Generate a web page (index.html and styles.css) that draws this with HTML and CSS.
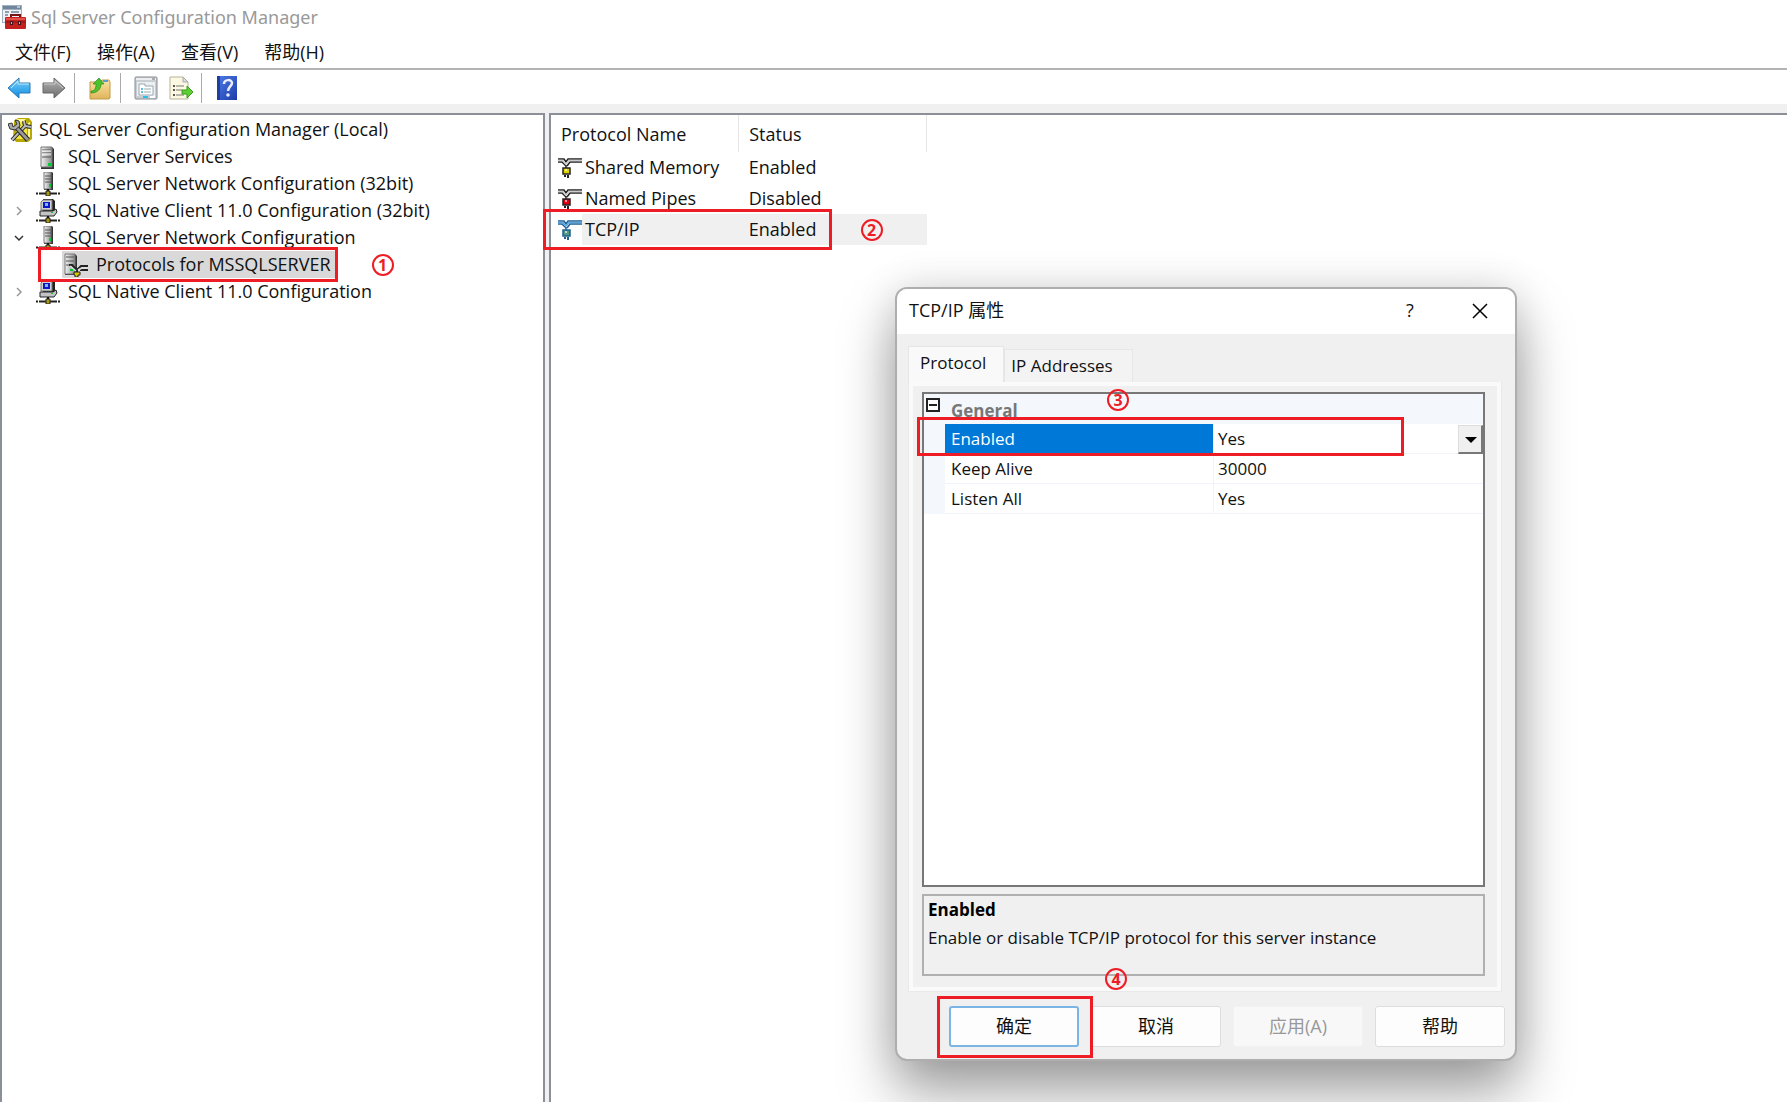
FILE: index.html
```html
<!DOCTYPE html>
<html lang="zh-CN">
<head>
<meta charset="utf-8">
<title>Sql Server Configuration Manager</title>
<link rel="stylesheet" href="styles.css">
</head>
<body>
<svg class="sprite" aria-hidden="true">
  <defs>
    <linearGradient id="steel" x1="0" x2="1"><stop offset="0" stop-color="#f4f4f4"/><stop offset="1" stop-color="#8c8c8c"/></linearGradient>
    <linearGradient id="sky" x1="0" x2="0" y1="0" y2="1"><stop offset="0" stop-color="#7fd3fb"/><stop offset="1" stop-color="#0b8be0"/></linearGradient>
    <linearGradient id="ash" x1="0" x2="0" y1="0" y2="1"><stop offset="0" stop-color="#b5b5b5"/><stop offset="1" stop-color="#6c6c6c"/></linearGradient>
    <linearGradient id="navy" x1="0" x2="1" y1="0" y2="1"><stop offset="0" stop-color="#4f7be8"/><stop offset="1" stop-color="#1c3ca8"/></linearGradient>
    <linearGradient id="manila" x1="0" x2="0" y1="0" y2="1"><stop offset="0" stop-color="#fbe3a0"/><stop offset="1" stop-color="#dfb45c"/></linearGradient>
  </defs>
  <symbol id="server" viewBox="0 0 24 24">
    <path d="M5 2h11l2 2v20H5z" fill="#333"/><path d="M5 2h11v20H5z" fill="url(#steel)" stroke="#777"/>
    <path d="M6 5h9M6 8h9M6 12h9" stroke="#555"/><path d="M6 6h9M6 9h9" stroke="#fff"/>
    <path d="M12 18h3v3h-3z" fill="#0c3"/>
  </symbol>
  <symbol id="netserver" viewBox="0 0 24 24">
    <path d="M8 0h8l1 1v17H8z" fill="#333"/><path d="M8 0h7v17H8z" fill="url(#steel)" stroke="#777"/>
    <path d="M9 4h6M9 7h6M9 10h6" stroke="#555"/><path d="M13 12h2v3h-2z" fill="#0c3"/>
    <path d="M12 17v4" stroke="#111" stroke-width="2"/><path d="M3 21.500h18" stroke="#222" stroke-width="2"/>
    <path d="M0 21.500h2M22 21.500h2" stroke="#222" stroke-width="2"/><path d="M10 19h4v5h-4z" fill="#a99a10" stroke="#222"/>
  </symbol>
  <symbol id="client" viewBox="0 0 24 24">
    <path d="M7 0h10l2 2v11H7z" fill="#222"/><path d="M7 1h9v10H5V3z" fill="#d0d0d0" stroke="#777"/>
    <path d="M7 3h7v6H7z" fill="#0a18c8"/><path d="M9 4h3v3H9z" fill="#7bb8ff"/>
    <path d="M4 12h13l3-2 1 3-3 4H4z" fill="#c4c4c4" stroke="#222"/><path d="M15 13h2v1h-2z" fill="#0c3"/>
    <path d="M12 17v4" stroke="#111" stroke-width="2"/><path d="M3 21.500h18M0 21.500h2M22 21.500h2" stroke="#222" stroke-width="2"/>
    <path d="M10 19h4v5h-4z" fill="#a99a10" stroke="#222"/>
  </symbol>
  <symbol id="protocols" viewBox="0 0 24 24">
    <path d="M1 1h10l2 2v19H1z" fill="#333"/><path d="M1 1h10v20H1z" fill="url(#steel)" stroke="#777"/>
    <path d="M2 4h8M2 8h8M2 12h8" stroke="#555"/><path d="M6 16h3v2H6z" fill="#0c3"/>
    <path d="M5 12h3l5 5v3M13 17l4-4h7M16 17h8" fill="none" stroke="#222" stroke-width="2"/>
    <path d="M6 13l6 5M14 17l4-2h6" fill="none" stroke="#ddd" stroke-width="1.500"/>
    <path d="M10 19h6v3h-2v2h-3v-2h-1z" fill="#d8c400" stroke="#222"/>
  </symbol>
  <symbol id="root" viewBox="0 0 24 24">
    <path d="M6 3l4-3h11l3 4v17l-4 3H8l-3-4z" fill="#b8a800"/><path d="M8 3h11v18H8z" fill="#f2e63a"/>
    <path d="M9 1h9l-3 3H8zM20 5l2-1v15l-2 2z" fill="#fff79a"/>
    <path d="M4 22L18 7M16 3l1 5 6 1" fill="none" stroke="#222" stroke-width="4"/>
    <path d="M4 22L18 7M16 3l1 5 6 1" fill="none" stroke="#bbb" stroke-width="2"/>
    <path d="M8 9l12 13" stroke="#222" stroke-width="5"/><path d="M8 9l12 13" stroke="#999" stroke-width="3"/>
    <path d="M0 6l4-1 1 4 4-3-2-4 4 1 1 5-5 4-5-1z" fill="#aaa" stroke="#333"/>
  </symbol>
  <symbol id="plug" viewBox="0 0 24 20">
    <path d="M0 1h6l2 3 2-3h14M0 4h4l4 4v2M24 4H12L9 8" fill="none" stroke="var(--dark)" stroke-width="1.500"/>
    <path d="M0 2.500h5l3 4M24 2.500H11L8 6" fill="none" stroke="var(--wire)" stroke-width="1.500"/>
    <path d="M5 10h7v6H5z" fill="var(--body)" stroke="var(--dark)" stroke-width="1.500"/>
    <path d="M7 11h2v2H7z" fill="#fff" opacity=".6"/>
    <path d="M7 17v2M10 17v3" stroke="var(--dark)" stroke-width="2"/>
  </symbol>
</svg>

<div class="app">
  <header class="titlebar">
    <svg class="icon" viewBox="0 0 24 24" aria-hidden="true">
      <path d="M0 0h20v18H0z" fill="#9fb0c0"/><path d="M1 1h18v3H1z" fill="#71869a"/><path d="M15 2h3" stroke="#fff"/>
      <path d="M1 5h18v12H1z" fill="#eef2f5"/><path d="M3 7h4M9 7h8M3 10h3" stroke="#8fa0ae" stroke-width="2"/>
      <path d="M9 13v-3h9v3" fill="none" stroke="#7a1414" stroke-width="2"/>
      <rect x="3" y="12" width="21" height="12" rx="1" fill="#c3211f"/><path d="M3 17h21" stroke="#8c1212"/>
      <path d="M4 13h19v2H4z" fill="#e4504a"/><path d="M8 16h3v4H8zM16 16h3v4h-3z" fill="#4a1515"/><path d="M9 17h1v2H9zM17 17h1v2h-1z" fill="#bbb"/>
    </svg>
    <h1>Sql Server Configuration Manager</h1>
  </header>

  <nav class="menubar">
    <button type="button">文件(F)</button>
    <button type="button">操作(A)</button>
    <button type="button">查看(V)</button>
    <button type="button">帮助(H)</button>
  </nav>

  <div class="toolbar" role="toolbar">
    <div class="tools">
      <button type="button" aria-label="Back"><svg class="icon" viewBox="0 0 24 24"><path d="M1 12L12 2v5h11v10H12v5z" fill="url(#sky)" stroke="#2d78b5"/><path d="M4 12l7-7v3h11" fill="none" stroke="#b9e8ff"/></svg></button>
      <button type="button" aria-label="Forward"><svg class="icon" viewBox="0 0 24 24"><path d="M23 12L12 2v5H1v10h11v5z" fill="url(#ash)" stroke="#666"/><path d="M2 8h11V5l8 7" fill="none" stroke="#ccc"/></svg></button>
    </div>
    <div class="tools">
      <button type="button" aria-label="Up one level"><svg class="icon" viewBox="0 0 24 24"><path d="M2 6h10l2-2h7l1 2v16l-1 1H2z" fill="url(#manila)" stroke="#c39a48"/><path d="M15 5h5" stroke="#5b9bd5" stroke-width="2"/><path d="M3 15c4 0 5-3 5-7H5l6-6 5 6h-3c0 6-5 9-10 9z" fill="#4cc22e" stroke="#2c8a1b" stroke-width=".7"/></svg></button>
    </div>
    <div class="tools">
      <button type="button" aria-label="Properties"><svg class="icon" viewBox="0 0 24 24"><rect x="1" y="1" width="22" height="22" rx="1" fill="#c9ced3" stroke="#868c93"/><path d="M2 3h20" stroke="#eee" stroke-width="2"/><path d="M18 3h3" stroke="#667"/><path d="M3 6h18v14H3z" fill="#eceff1"/><path d="M5 8h6v2h8v9H5z" fill="#fff" stroke="#98a6b3"/><path d="M7 13h2M7 16h2" stroke="#2aa7e0" stroke-width="1.500"/><path d="M10 13h7M10 16h7" stroke="#9aa"/><path d="M9 20h5v2H9z" fill="#23c3ee"/><path d="M16 20h5v2h-5z" fill="#fff"/></svg></button>
      <button type="button" aria-label="Export list"><svg class="icon" viewBox="0 0 24 24"><path d="M1 1h13l5 5v17H1z" fill="#fcf8e2" stroke="#b8b49c"/><path d="M14 1v5h5z" fill="#ddd" stroke="#aaa"/><path d="M4 10h2M4 14h2M4 19h2" stroke="#222" stroke-width="1.500"/><path d="M7 10h8M7 14h6M7 19h8" stroke="#777"/><path d="M13 14h5v-4l6 6-6 6v-4h-5z" fill="#5fcf35" stroke="#37a01e"/></svg></button>
    </div>
    <div class="tools">
      <button type="button" aria-label="Help"><svg class="icon" viewBox="0 0 24 24"><path d="M2 0h20v24H2z" fill="url(#navy)"/><path d="M2 0h3v24H2z" fill="#1e3f9c"/><path d="M9 8c0-5 8-5 8-1 0 3-4 4-4 8" fill="none" stroke="#e8eefc" stroke-width="2.500"/><circle cx="13" cy="19" r="1.800" fill="#e8eefc"/></svg></button>
    </div>
  </div>

  <main class="panes">
    <section class="pane tree-pane">
      <ul class="tree">
        <li class="node root"><svg class="icon"><use href="#root"/></svg><span class="label">SQL Server Configuration Manager (Local)</span></li>
        <li class="node"><span class="twist"></span><svg class="icon"><use href="#server"/></svg><span class="label">SQL Server Services</span></li>
        <li class="node"><span class="twist"></span><svg class="icon"><use href="#netserver"/></svg><span class="label">SQL Server Network Configuration (32bit)</span></li>
        <li class="node"><span class="twist"><svg class="chevron" viewBox="0 0 12 12"><path d="M4 2l4 4-4 4" stroke="#999"/></svg></span><svg class="icon"><use href="#client"/></svg><span class="label">SQL Native Client 11.0 Configuration (32bit)</span></li>
        <li class="node"><span class="twist"><svg class="chevron" viewBox="0 0 12 12"><path d="M2 4l4 4 4-4" stroke="#333"/></svg></span><svg class="icon"><use href="#netserver"/></svg><span class="label">SQL Server Network Configuration</span></li>
        <li class="node child"><span class="picked"><svg class="icon"><use href="#protocols"/></svg><span class="label">Protocols for MSSQLSERVER</span><span class="frame frame-tree"></span><span class="step step-tree">1</span></span></li>
        <li class="node"><span class="twist"><svg class="chevron" viewBox="0 0 12 12"><path d="M4 2l4 4-4 4" stroke="#999"/></svg></span><svg class="icon"><use href="#client"/></svg><span class="label">SQL Native Client 11.0 Configuration</span></li>
      </ul>
    </section>

    <section class="pane list-pane">
      <table class="protocols">
        <thead><tr><th>Protocol Name</th><th>Status</th></tr></thead>
        <tbody>
          <tr><td><div class="name"><svg class="plug yellow"><use href="#plug"/></svg><span>Shared Memory</span></div></td><td>Enabled</td></tr>
          <tr><td><div class="name"><svg class="plug red"><use href="#plug"/></svg><span>Named Pipes</span></div></td><td>Disabled</td></tr>
          <tr class="current"><td><div class="name"><svg class="plug blue"><use href="#plug"/></svg><span>TCP/IP</span><i class="frame frame-list"></i></div></td><td>Enabled<span class="step step-list">2</span></td></tr>
        </tbody>
      </table>
    </section>
  </main>

  <div class="dialog" role="dialog" aria-labelledby="dialog-title">
    <header class="dialog-head">
      <h2 id="dialog-title">TCP/IP 属性</h2>
      <button type="button" aria-label="Help">?</button>
      <button type="button" aria-label="Close"><svg class="close" viewBox="0 0 16 16"><path d="M1 1l14 14M15 1L1 15"/></svg></button>
    </header>
    <div class="dialog-body">
      <div class="tabs" role="tablist">
        <button type="button" role="tab" aria-selected="true">Protocol</button>
        <button type="button" role="tab" aria-selected="false">IP Addresses</button>
      </div>
      <div class="sheet" role="tabpanel">
        <div class="grid">
          <div class="category"><button type="button" class="collapse" aria-label="Collapse General"></button><b>General</b><span class="step step-grid">3</span></div>
          <div class="prop active"><label for="enabled">Enabled</label><div class="value"><select id="enabled"><option>Yes</option><option>No</option></select><span class="drop"></span></div><span class="frame frame-grid"></span></div>
          <div class="prop"><span class="key">Keep Alive</span><span class="value">30000</span></div>
          <div class="prop"><span class="key">Listen All</span><span class="value">Yes</span></div>
        </div>
        <div class="hint"><b>Enabled</b><p>Enable or disable TCP/IP protocol for this server instance</p></div>
      </div>
      <div class="actions">
        <button type="button" class="primary">确定<span class="frame frame-ok"></span></button>
        <button type="button">取消<span class="step step-ok">4</span></button>
        <button type="button" disabled>应用(A)</button>
        <button type="button">帮助</button>
      </div>
    </div>
  </div>
</div>
</body>
</html>
```
FILE: styles.css
```css
* { box-sizing: border-box; }

:root {
  --face: #f0f0f0;
  --edge: #8a8f98;
  --mark: #ee1c25;
}

body {
  margin: 0;
  background: #fff;
  color: #111;
  font: 18px/27px "Open Sans", "Noto Sans CJK SC", sans-serif;
}

button, select {
  margin: 0;
  padding: 0;
  border: 0;
  background: none;
  color: inherit;
  font: inherit;
}

h1, h2, p, ul { margin: 0; padding: 0; font-size: 18px; font-weight: 400; }

.sprite { position: absolute; width: 0; height: 0; }
.icon { display: block; flex: none; width: 24px; height: 24px; }

.app { position: relative; display: flex; flex-direction: column; min-height: 100vh; overflow: hidden; }

.titlebar { display: flex; align-items: center; gap: 5px; height: 34px; padding: 0 2px; }
.titlebar h1 { color: #999; font-family: "Noto Sans", sans-serif; }

.menubar { display: flex; gap: 26px; height: 36px; padding: 2px 15px 0; border-bottom: 2px solid #b4b4b4; }

.toolbar { display: flex; height: 34px; padding: 3px 0 1px 7px; }
.tools { display: flex; align-items: center; gap: 11px; padding-right: 8px; }
.tools + .tools { padding-left: 13px; border-left: 1px solid #aaa; }

.panes { flex: 1; display: flex; gap: 4px; padding-top: 9px; background: var(--face); }
.pane { border: 2px solid var(--edge); border-bottom: 0; background: #fff; }
.tree-pane { flex: 0 0 545px; }
.list-pane { flex: 1; min-width: 0; border-right: 0; }

.tree { padding: 1px 0 0 6px; list-style: none; }
.node { display: flex; align-items: center; gap: 8px; height: 27px; white-space: nowrap; }
.node.root { gap: 7px; }
.twist { width: 20px; }
.chevron { display: block; width: 12px; height: 12px; margin-left: 5px; fill: none; stroke-width: 1.5; }
.child { padding-left: 54px; }
.picked { position: relative; display: flex; align-items: center; gap: 8px; height: 27px; padding: 0 4px 0 2px; background: #d9d9d9; }

.frame { position: absolute; border: 3px solid var(--mark); pointer-events: none; }
.step {
  position: absolute;
  width: 22px;
  height: 22px;
  border: 2px solid var(--mark);
  border-radius: 50%;
  color: var(--mark);
  font: 700 16px/18px "Open Sans", sans-serif;
  text-align: center;
}
.frame-tree { inset: -4px -3px -4px -24px; }
.step-tree { top: 3px; right: -59px; }

.protocols { width: 376px; border-collapse: collapse; table-layout: fixed; }
.protocols th, .protocols td { padding: 0 10px; text-align: left; font-weight: 400; }
.protocols th { height: 37px; padding-top: 2px; border-right: 1px solid #e5e5e5; }
.protocols td { position: relative; height: 31px; }
.protocols td:first-child { padding: 0 0 0 7px; }
.name { display: flex; align-items: center; }
.name > span { flex: 1; padding-left: 3px; line-height: 31px; }
.current td:last-child, .current .name > span { background: var(--face); }
.plug { width: 24px; height: 20px; --dark: #222; --wire: #ccc; }
.yellow { --body: #e0d400; }
.red { --body: #e00010; }
.blue { --body: #4f9a80; --dark: #1f6094; --wire: #5aa5dc; }
.frame-list { top: -5px; left: -8px; width: 289px; height: 41px; z-index: 1; }
.step-list { top: 5px; right: 44px; }

.dialog {
  position: absolute;
  top: 287px;
  left: 895px;
  width: 622px;
  border: 2px solid #aeaeae;
  border-radius: 12px;
  background: var(--face);
  box-shadow: 0 32px 56px rgba(0, 0, 0, .36), 0 0 40px rgba(0, 0, 0, .12);
}
.dialog-head { display: flex; align-items: center; height: 45px; padding-left: 12px; border-radius: 10px 10px 0 0; background: #fff; }
.dialog-head h2 { flex: 1; padding-bottom: 2px; }
.dialog-head button { width: 70px; height: 45px; padding-bottom: 2px; }
.close { display: block; width: 16px; height: 16px; margin: auto; fill: none; stroke: #000; stroke-width: 1.5; }
.dialog-body { padding: 12px 10px 12px 11px; }

.tabs { display: flex; align-items: flex-end; font-size: 17px; }
.tabs button { height: 33px; padding: 0 19px 2px 6px; border: 1px solid #e6e6e6; border-bottom: 0; background: #f3f3f3; }
.tabs button:first-child { height: 36px; padding: 0 17px 4px 11px; background: #f9f9f9; }

.sheet { margin-right: 3px; padding: 4px; border: 1px solid #e9e9e9; border-top: 0; background: var(--face); box-shadow: inset 0 0 0 4px #fafafa; font-size: 17px; }
.grid { height: 495px; margin: 6px 12px 0 9px; border: 2px solid #777; background: #fff; }
.category { position: relative; display: flex; height: 30px; gap: 11px; padding-left: 2px; background: #f4f7fc; }
.category b { padding-top: 3px; color: #777; }
.collapse { position: relative; width: 14px; height: 14px; margin-top: 4px; border: 2px solid #222; background: linear-gradient(#222, #222) center / 8px 2px no-repeat #fff; }
.prop { position: relative; display: flex; height: 30px; border-left: 21px solid #f4f7fc; line-height: 29px; }
.prop.active { z-index: 1; }
.key, .prop label { width: 269px; padding-left: 6px; border-right: 1px solid #f0f4fa; border-bottom: 1px solid #f0f4fa; }
.value { flex: 1; padding-left: 4px; border-bottom: 1px solid #f0f4fa; }
.active label { background: #0078d7; color: #fff; }
.active .value { position: relative; display: flex; }
.prop select { flex: 1; appearance: none; outline: 0; }
.drop { position: absolute; top: 1px; right: 0; width: 25px; height: 29px; border: 1px solid; border-color: #ddd #777 #777 #ddd; border-width: 1px 2px 2px 1px; background: var(--face); pointer-events: none; }
.drop::after { content: ""; position: absolute; top: 11px; left: 6px; border: 6px solid transparent; border-top-color: #000; border-bottom: 0; }
.frame-grid { top: -7px; left: -28px; width: 487px; height: 39px; }
.step-grid { top: -5px; left: 183px; }

.hint { height: 82px; margin: 7px 12px 11px 9px; padding: 0 4px; border: 2px solid #b0b0b0; }
.hint b { color: #000; }
.hint p { margin-top: 1px; font-size: 17px; }

.actions { display: flex; justify-content: flex-end; gap: 12px; margin-top: 14px; }
.actions button { position: relative; width: 130px; height: 41px; border: 1px solid #ddd; border-radius: 3px; background: #fdfdfd; }
.actions .primary { border: 2px solid #7ab5e6; }
.actions button:disabled { border-color: #f2f2f2; background: #f8f8f8; color: #999; }
.actions .frame-ok { inset: -12px -16px -13px -14px; z-index: 1; }
.step-ok { top: -39px; left: 13px; }
```
